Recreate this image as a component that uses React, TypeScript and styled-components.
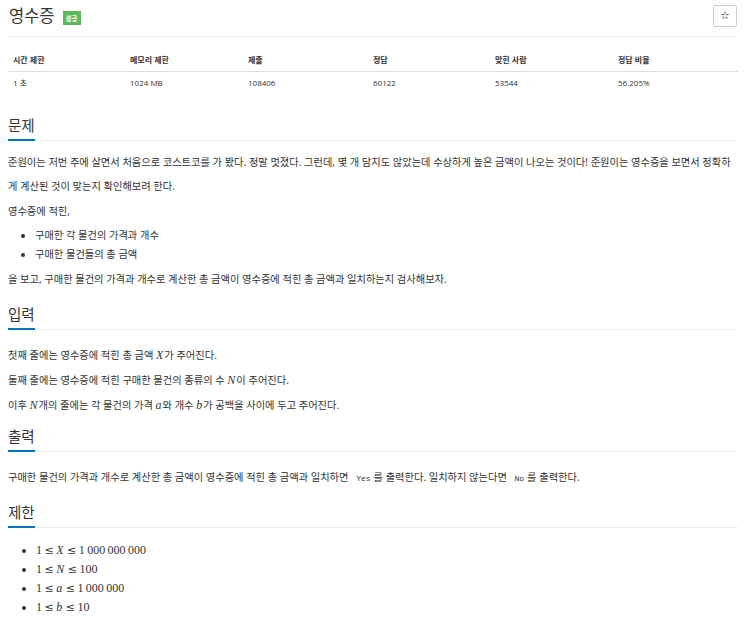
import React from 'react';
import styled, { createGlobalStyle } from 'styled-components';

const GlobalStyle = createGlobalStyle`
    body {
        margin: 0;
        background: #fff;
        font-family: 'Open Sans', 'Noto Sans CJK KR', sans-serif;
        color: #333;
    }
`;

const stats = [
    { label: '시간 제한', value: '1 초' },
    { label: '메모리 제한', value: '1024 MB' },
    { label: '제출', value: '108406' },
    { label: '정답', value: '60122' },
    { label: '맞힌 사람', value: '53544' },
    { label: '정답 비율', value: '56.205%' },
];

function Le() {
    return <Rel>≤</Rel>;
}

function App() {
    return (
        <Page>
            <GlobalStyle />
            <Header>
                <TitleRow>
                    <Title>영수증</Title>
                    <Badge>성공</Badge>
                </TitleRow>
                <StarButton>☆</StarButton>
            </Header>

            <StatTable>
                {stats.map((s) => (
                    <HeadCell key={s.label}>{s.label}</HeadCell>
                ))}
                {stats.map((s) => (
                    <DataCell key={s.label}>{s.value}</DataCell>
                ))}
            </StatTable>

            <Section $after={13}>
                <Headline $tight>
                    <HeadText>문제</HeadText>
                </Headline>
                <P>
                    준원이는 저번 주에 살면서 처음으로 코스트코를 가 봤다. 정말 멋졌다. 그런데, 몇 개 담지도 않았는데 수상하게
                    높은 금액이 나오는 것이다! 준원이는 영수증을 보면서 정확하게 계산된 것이 맞는지 확인해보려 한다.
                </P>
                <P>영수증에 적힌,</P>
                <List>
                    <Item>구매한 각 물건의 가격과 개수</Item>
                    <Item>구매한 물건들의 총 금액</Item>
                </List>
                <P>을 보고, 구매한 물건의 가격과 개수로 계산한 총 금액이 영수증에 적힌 총 금액과 일치하는지 검사해보자.</P>
            </Section>

            <Section $after={9}>
                <Headline>
                    <HeadText>입력</HeadText>
                </Headline>
                <P>
                    첫째 줄에는 영수증에 적힌 총 금액 <Var>X</Var>가 주어진다.
                </P>
                <P>
                    둘째 줄에는 영수증에 적힌 구매한 물건의 종류의 수 <Var>N</Var>이 주어진다.
                </P>
                <P>
                    이후 <Var>N</Var>개의 줄에는 각 물건의 가격 <Var>a</Var>와 개수 <Var>b</Var>가 공백을 사이에 두고 주어진다.
                </P>
            </Section>

            <Section $after={11}>
                <Headline>
                    <HeadText>출력</HeadText>
                </Headline>
                <P>
                    구매한 물건의 가격과 개수로 계산한 총 금액이 영수증에 적힌 총 금액과 일치하면 <Code>Yes</Code>를 출력한다.
                    일치하지 않는다면 <Code>No</Code>를 출력한다.
                </P>
            </Section>

            <Section>
                <Headline>
                    <HeadText>제한</HeadText>
                </Headline>
                <MathList>
                    <MathItem>
                        <Num>1</Num>
                        <Le />
                        <Var>X</Var>
                        <Le />
                        <Num>1{'\u2009'}000{'\u2009'}000{'\u2009'}000</Num>
                    </MathItem>
                    <MathItem>
                        <Num>1</Num>
                        <Le />
                        <Var>N</Var>
                        <Le />
                        <Num>100</Num>
                    </MathItem>
                    <MathItem>
                        <Num>1</Num>
                        <Le />
                        <Var>a</Var>
                        <Le />
                        <Num>1{'\u2009'}000{'\u2009'}000</Num>
                    </MathItem>
                    <MathItem>
                        <Num>1</Num>
                        <Le />
                        <Var>b</Var>
                        <Le />
                        <Num>10</Num>
                    </MathItem>
                </MathList>
            </Section>
        </Page>
    );
}

const Page = styled.div`
    width: 730px;
    padding: 0 12px 0 8px;
`;

const Header = styled.div`
    display: flex;
    justify-content: space-between;
    align-items: center;
    height: 37px;
    box-sizing: border-box;
    padding: 0 1px 6px 0;
    border-bottom: 1px solid #eee;
`;

const TitleRow = styled.div`
    display: flex;
    align-items: center;
    gap: 8px;
    padding-left: 1px;
`;

const Title = styled.h1`
    margin: 0;
    font-family: 'Noto Sans CJK KR', sans-serif;
    font-size: 16.5px;
    font-weight: 400;
    line-height: 30px;
    color: #333;
`;

const Badge = styled.span`
    margin-top: 6px;
    padding: 0 3px;
    height: 14px;
    line-height: 14px;
    background: #5cb85c;
    color: #fff;
    font-family: 'Noto Sans CJK KR', sans-serif;
    font-size: 6.5px;
    font-weight: 700;
`;

const StarButton = styled.button`
    width: 24px;
    height: 22px;
    padding: 0;
    margin-top: 1px;
    border: 1px solid #ccc;
    border-radius: 2px;
    background: #fff;
    color: #222;
    font-family: 'DejaVu Sans', sans-serif;
    font-size: 11px;
    font-weight: 700;
    line-height: 20px;
`;

const StatTable = styled.div`
    display: grid;
    grid-template-columns: 117px 118px 125px 122px 123px 1fr;
    margin: 12px 0 21px;
`;

const HeadCell = styled.div`
    height: 22px;
    line-height: 22px;
    padding-left: 5px;
    border-bottom: 1px solid #ddd;
    font-size: 8px;
    font-weight: 700;
    color: #333;
`;

const DataCell = styled.div`
    height: 22px;
    line-height: 22px;
    padding-left: 5px;
    font-size: 8px;
    color: #333;
`;

const Section = styled.section<{ $after?: number }>`
    margin-bottom: ${(p) => p.$after ?? 8}px;
`;

const Headline = styled.div<{ $tight?: boolean }>`
    display: flex;
    border-bottom: 1px solid #eee;
    margin-bottom: ${(p) => (p.$tight ? 9 : 13)}px;
`;

const HeadText = styled.h2`
    margin: 0 0 -1px;
    padding-bottom: 4px;
    border-bottom: 2px solid #0076c0;
    font-family: 'Noto Sans CJK KR', sans-serif;
    font-size: 14.5px;
    font-weight: 400;
    line-height: 20px;
    color: #333;
`;

const P = styled.p`
    margin: 0 0 1px;
    font-family: 'Open Sans', 'Noto Sans CJK KR', sans-serif;
    font-size: 10.25px;
    line-height: 24px;
    color: #333;
`;

const List = styled.ul`
    margin: 3px 0 3px;
    padding-left: 27px;
`;

const Item = styled.li`
    font-family: 'Open Sans', 'Noto Sans CJK KR', sans-serif;
    font-size: 10.25px;
    line-height: 19px;
    color: #333;
`;

const MathList = styled.ul`
    margin: 4px 0 0;
    padding-left: 28px;
`;

const MathItem = styled.li`
    font-family: 'Liberation Serif', serif;
    font-size: 12px;
    line-height: 19px;
    color: #333;
`;

const Num = styled.span`
    font-family: 'Liberation Serif', serif;
    word-spacing: -1px;
`;

const Rel = styled.span`
    margin: 0 2.5px;
    font-family: 'DejaVu Serif', 'Liberation Serif', serif;
    font-size: 11px;
`;

const Var = styled.span`
    font-family: 'Liberation Serif', serif;
    font-style: italic;
    font-size: 12px;
    padding-right: 1px;
`;

const Code = styled.code`
    padding: 0 3px;
    margin-left: 2px;
    font-family: 'Liberation Mono', monospace;
    font-size: 8px;
    color: #333;
`;

export default App;
